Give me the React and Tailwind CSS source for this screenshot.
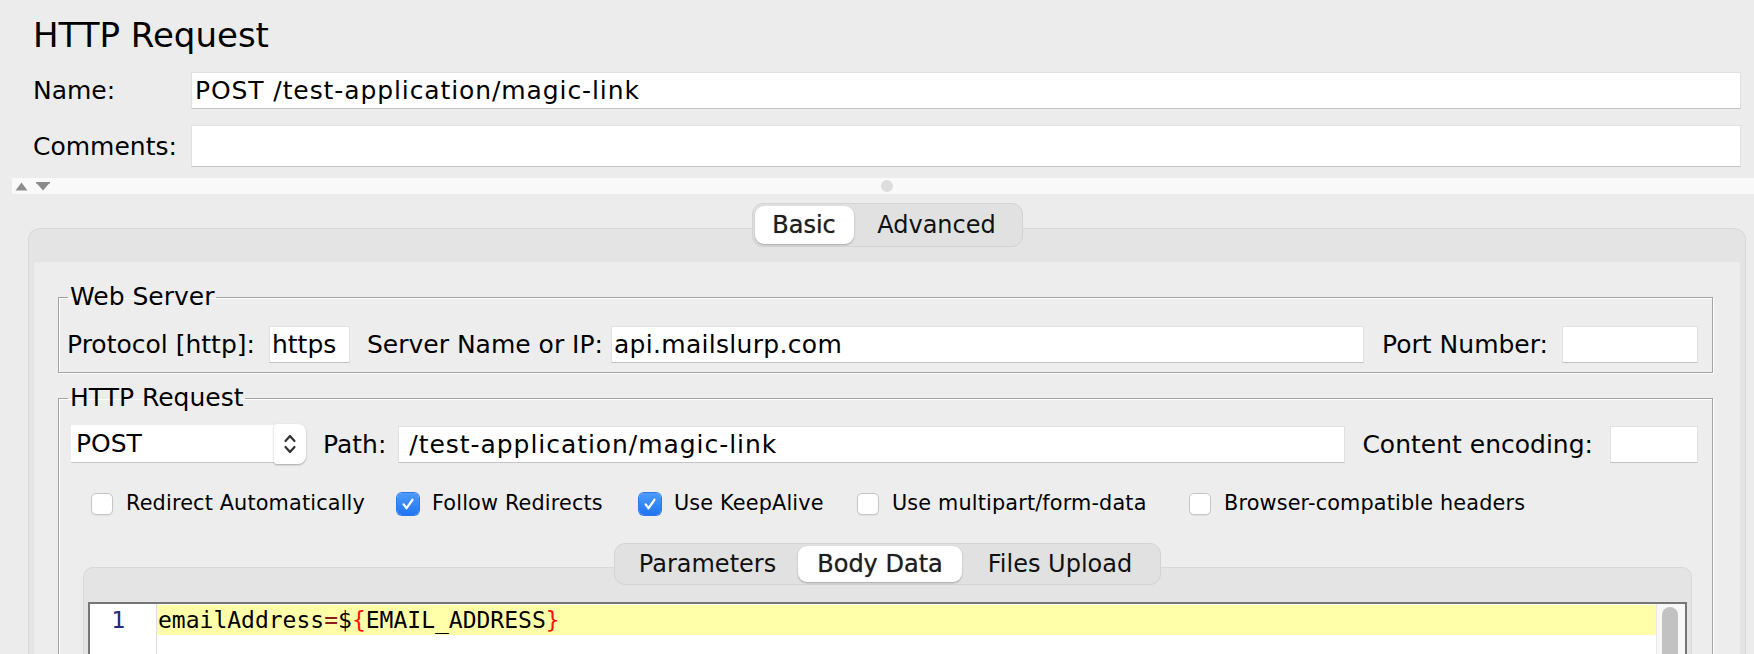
import React from 'react';

const Field = ({ value = '', className = '' }) => (
  <div
    className={`bg-white border border-[#e1e1e1] border-b-[#c3c3c3] flex items-center text-[25px] leading-[29px] text-black whitespace-nowrap overflow-hidden ${className}`}
  >
    {value}
  </div>
);

const Label = ({ children, className = '' }) => (
  <span className={`text-[25px] leading-[29px] text-black whitespace-nowrap ${className}`}>{children}</span>
);

const Checkbox = ({ checked, label, w }) => (
  <div className={`flex items-center gap-[13px] shrink-0 ${w}`}>
    {checked ? (
      <span className="w-[22px] h-[22px] rounded-[5px] bg-gradient-to-b from-[#4c9bfb] to-[#1f74f2] flex items-center justify-center shadow-[0_0_0_1px_#2f78e6]">
        <svg width="14" height="14" viewBox="0 0 14 14">
          <path d="M2.6 7.4 L5.6 11.2 L11.4 2.8" stroke="white" strokeWidth="2.3" fill="none" strokeLinecap="round" strokeLinejoin="round" />
        </svg>
      </span>
    ) : (
      <span className="w-[22px] h-[22px] rounded-[5px] bg-white border border-[#c6c6c6] shadow-[0_1px_1px_rgba(0,0,0,0.06)]" />
    )}
    <span className="text-[20.8px] leading-[25px] text-black whitespace-nowrap tracking-[0.15px]">{label}</span>
  </div>
);

const Segmented = ({ items, height }) => (
  <div className={`relative z-10 flex p-[2px] bg-[#e1e1e1] border border-[#d3d3d3] rounded-[11px] ${height}`}>
    {items.map((it) => (
      <div
        key={it.label}
        className={`${it.w} h-full flex items-center justify-center text-[24px] leading-[28px] whitespace-nowrap ${
          it.active
            ? 'bg-white rounded-[9px] shadow-[0_1px_2px_rgba(0,0,0,0.28)] text-[#1e1e1e] [text-shadow:0_0_1px_rgba(0,0,0,0.55)]'
            : 'text-[#111]'
        }`}
      >
        {it.label}
      </div>
    ))}
  </div>
);

const Fieldset = ({ title, className = '', children }) => (
  <fieldset className={`border border-[#a3a3a3] shadow-[inset_1px_1px_0_#ffffff,1px_1px_0_#ffffff] ${className}`}>
    <legend className="ml-[9px] px-[2px] text-[25px] leading-[30px] text-black">{title}</legend>
    {children}
  </fieldset>
);

export default function App() {
  return (
    <div className="w-[1754px] h-[654px] overflow-hidden bg-[#ececec] flex flex-col font-['DejaVu_Sans',sans-serif] text-black">
      {/* Title */}
      <div className="pt-[16px] pl-[33px] text-[34px] leading-[39px]">HTTP Request</div>

      {/* Name / Comments */}
      <div className="mt-[17px] flex items-center">
        <Label className="w-[191px] pl-[33px]">Name:</Label>
        <Field value="POST /test-application/magic-link" className="flex-1 mr-[13px] h-[37px] pl-[3px] tracking-[0.9px]" />
      </div>
      <div className="mt-[16px] flex items-center">
        <Label className="w-[191px] pl-[33px]">Comments:</Label>
        <Field className="flex-1 mr-[13px] h-[42px]" />
      </div>

      {/* Splitter */}
      <div className="relative mt-[11px] ml-[12px] h-[16px] bg-[#f9f9f9] flex items-center pl-[3px] gap-[8px]">
        <svg width="13" height="9" viewBox="0 0 13 9">
          <polygon points="6.5,0.5 12.5,8.5 0.5,8.5" fill="#8d8d8d" />
        </svg>
        <svg width="14" height="9" viewBox="0 0 14 9">
          <rect x="0" y="0" width="14" height="1.5" fill="#8a8a8a" />
          <polygon points="0.5,1 13.5,1 7,8.5" fill="#8a8a8a" />
        </svg>
        <span className="absolute left-[869px] top-[2px] w-[12px] h-[12px] rounded-full bg-[#dddddd]" />
      </div>

      {/* Basic / Advanced */}
      <div className="mt-[9px] ml-[28px] mr-[8px] flex justify-center">
        <Segmented
          height="h-[44px]"
          items={[
            { label: 'Basic', w: 'w-[99px]', active: true },
            { label: 'Advanced', w: 'w-[166px]' },
          ]}
        />
      </div>

      {/* Outer tab panel */}
      <div className="-mt-[19px] ml-[28px] mr-[8px] flex-1 min-h-0 border border-b-0 border-[#d8d8d8] rounded-t-[12px] bg-[#e4e4e4] pt-[33px] px-[5px] flex flex-col">
        <div className="flex-1 bg-[#ededed] pl-[24px] pr-[27px] flex flex-col">
          {/* Web Server */}
          <Fieldset title="Web Server" className="mt-[20px]">
            <div className="pt-[14px] pb-[9px] pl-[8px] pr-[14px] flex items-center">
              <Label>Protocol [http]:</Label>
              <Field value="https" className="w-[81px] ml-[14px] h-[37px] pl-[2px]" />
              <Label className="ml-[17px]">Server Name or IP:</Label>
              <Field value="api.mailslurp.com" className="flex-1 ml-[8px] h-[37px] pl-[2px] tracking-[0.3px]" />
              <Label className="ml-[18px]">Port Number:</Label>
              <Field className="w-[136px] ml-[14px] h-[37px]" />
            </div>
          </Fieldset>

          {/* HTTP Request */}
          <Fieldset title="HTTP Request" className="mt-[10px]">
            <div className="pt-[11px] pl-[12px] pr-[14px] flex items-center">
              <div className="flex items-center h-[40px]">
                <div className="w-[203px] h-[38px] bg-white border-b border-[#c9c9c9] pl-[5px] flex items-center">
                  <Label>POST</Label>
                </div>
                <div className="w-[32px] h-[40px] bg-white rounded-[8px] rounded-l-[3px] shadow-[0_1px_2px_rgba(0,0,0,0.3)] flex items-center justify-center">
                  <svg width="14" height="26" viewBox="0 0 14 26">
                    <path d="M2.5 10 L7 5 L11.5 10" stroke="#333" strokeWidth="2.2" fill="none" strokeLinecap="round" strokeLinejoin="round" />
                    <path d="M2.5 16 L7 21 L11.5 16" stroke="#333" strokeWidth="2.2" fill="none" strokeLinecap="round" strokeLinejoin="round" />
                  </svg>
                </div>
              </div>
              <Label className="ml-[17px]">Path:</Label>
              <Field value="/test-application/magic-link" className="flex-1 ml-[12px] h-[37px] pl-[10px] tracking-[0.95px]" />
              <Label className="ml-[17px]">Content encoding:</Label>
              <Field className="w-[88px] ml-[17px] h-[37px]" />
            </div>

            <div className="mt-[27px] pl-[32px] flex items-center">
              <Checkbox label="Redirect Automatically" w="w-[306px]" />
              <Checkbox label="Follow Redirects" checked w="w-[242px]" />
              <Checkbox label="Use KeepAlive" checked w="w-[218px]" />
              <Checkbox label="Use multipart/form-data" w="w-[332px]" />
              <Checkbox label="Browser-compatible headers" />
            </div>

            {/* Parameters / Body Data / Files Upload */}
            <div className="mt-[27px] ml-[24px] mr-[20px] flex justify-center">
              <Segmented
                height="h-[42px]"
                items={[
                  { label: 'Parameters', w: 'w-[181px]' },
                  { label: 'Body Data', w: 'w-[164px]', active: true },
                  { label: 'Files Upload', w: 'w-[196px]' },
                ]}
              />
            </div>

            <div className="-mt-[18px] ml-[24px] mr-[20px] h-[120px] border border-b-0 border-[#d8d8d8] rounded-t-[10px] bg-[#e4e4e4] pt-[34px] px-[4px]">
              <div className="h-full border-2 border-[#767676] bg-white flex">
                <div className="w-[67px] border-r border-[#dedede] pt-[1px]">
                  <div className="h-[30px] text-right pr-[31px] font-['DejaVu_Sans_Mono',monospace] text-[23px] leading-[30px] text-[#1b2a82]">
                    1
                  </div>
                </div>
                <div className="flex-1 pt-[1px]">
                  <div className="h-[30px] bg-[#ffffaa] pl-[1px] font-['DejaVu_Sans_Mono',monospace] text-[23px] leading-[30px] text-black whitespace-nowrap">
                    emailAddress<span className="text-[#8b1c1c]">=</span>$<span className="text-[#ff1111]">{'{'}</span>EMAIL_ADDRESS<span className="text-[#ff1111]">{'}'}</span>
                  </div>
                </div>
                <div className="w-[29px] bg-[#f8f8f8] border-l border-[#e8e8e8] pl-[5px] pt-[3px]">
                  <div className="w-[16px] h-[200px] rounded-full bg-[#c2c2c2]" />
                </div>
              </div>
            </div>
          </Fieldset>
        </div>
      </div>
    </div>
  );
}
